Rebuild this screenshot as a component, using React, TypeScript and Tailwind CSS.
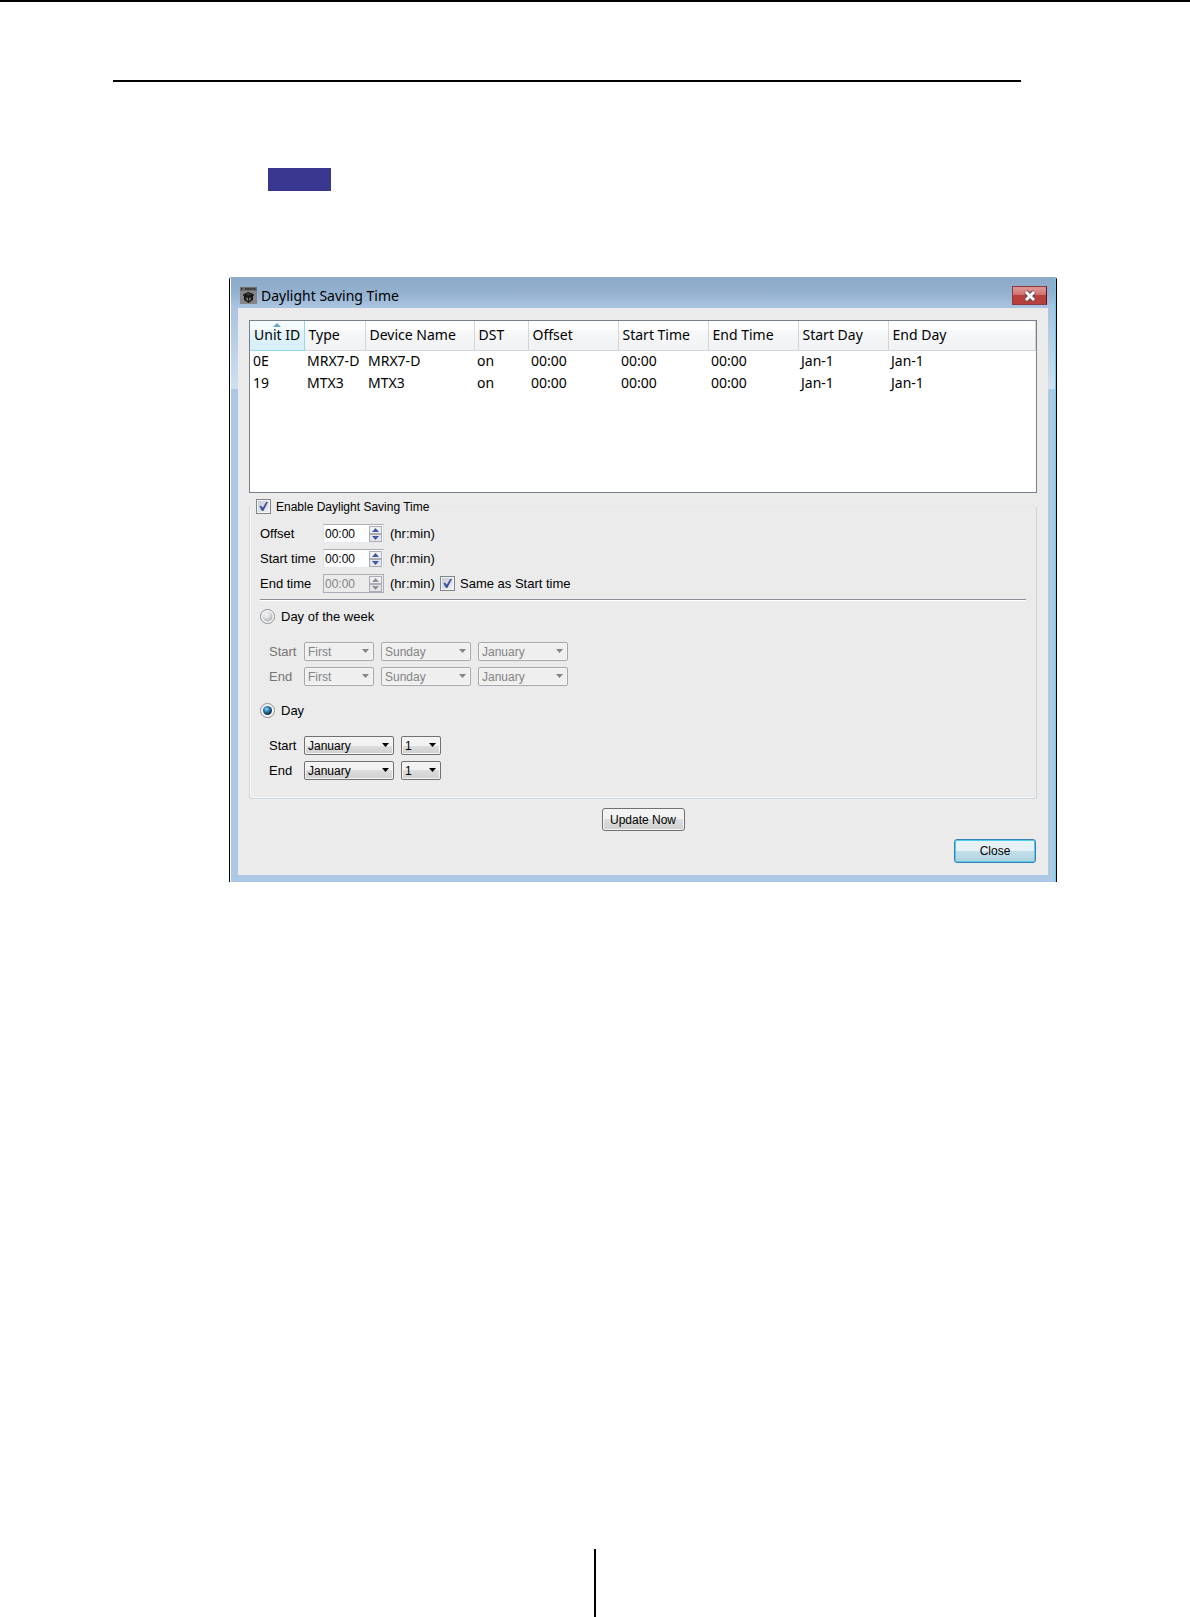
import React, { useState } from 'react';

type Device = {
    id: string;
    type: string;
    name: string;
    dst: string;
    offset: string;
    startTime: string;
    endTime: string;
    startDay: string;
    endDay: string;
};

const devices: Device[] = [
    { id: '0E', type: 'MRX7-D', name: 'MRX7-D', dst: 'on', offset: '00:00', startTime: '00:00', endTime: '00:00', startDay: 'Jan-1', endDay: 'Jan-1' },
    { id: '19', type: 'MTX3', name: 'MTX3', dst: 'on', offset: '00:00', startTime: '00:00', endTime: '00:00', startDay: 'Jan-1', endDay: 'Jan-1' },
];

const columns = [
    { label: 'Unit ID', width: 'w-[54px]' },
    { label: 'Type', width: 'w-[61px]' },
    { label: 'Device Name', width: 'w-[109px]' },
    { label: 'DST', width: 'w-[54px]' },
    { label: 'Offset', width: 'w-[90px]' },
    { label: 'Start Time', width: 'w-[90px]' },
    { label: 'End Time', width: 'w-[90px]' },
    { label: 'Start Day', width: 'w-[90px]' },
    { label: 'End Day', width: '' },
];

const AppIcon: React.FC = () => (
    <svg className="h-[17px] w-[17px]" viewBox="0 0 17 17" aria-hidden="true">
        <rect width="17" height="17" fill="#858585" />
        <rect width="17" height="4" fill="#6e6e6e" />
        <path d="M1 2h1.500M5 2h11" stroke="#2a2a2a" strokeWidth="1.600" strokeDasharray="1.700 0.500" />
        <path d="M8.500 5L13.800 7.300V8.800L13 9V13L8.500 16L4 13V9L3.200 8.800V7.300Z" fill="#181818" />
        <path d="M8.500 6L11.500 7.300L8.500 8.600L5.500 7.300Z" fill="#3c3c3c" />
        <path d="M6.300 10.200L8 11V14L6.300 13ZM10.700 10.200L9 11V14L10.700 13Z" fill="#777" />
    </svg>
);

type CheckProps = { id: string; checked: boolean; onChange: (value: boolean) => void };

const CheckBox: React.FC<CheckProps> = ({ id, checked, onChange }) => (
    <span className="relative block h-[15px] w-[15px] shrink-0">
        <input
            id={id}
            type="checkbox"
            checked={checked}
            onChange={(e) => onChange(e.target.checked)}
            className="block h-[15px] w-[15px] appearance-none border border-[#80858c] bg-linear-to-br from-[#c3c8d0] to-[#f4f5f7] shadow-[inset_0_0_0_1px_#f4f4f4]"
        />
        {checked && (
            <svg className="pointer-events-none absolute inset-0 h-[15px] w-[15px]" viewBox="0 0 15 15" aria-hidden="true">
                <path d="M3.500 7.500L5 6.500L6.700 8.700L10.200 3L12 3L7.300 12H6Z" fill="#3e4f9c" />
            </svg>
        )}
    </span>
);

type RadioProps = { id: string; checked: boolean; onSelect: () => void };

const Radio: React.FC<RadioProps> = ({ id, checked, onSelect }) => (
    <span className="relative block h-[15px] w-[15px] shrink-0">
        <input
            id={id}
            type="radio"
            name="dstMode"
            checked={checked}
            onChange={onSelect}
            className="block h-[15px] w-[15px] appearance-none rounded-full border border-[#8c9095] bg-[#f6f6f6]"
        />
        <svg className="pointer-events-none absolute inset-0 h-[15px] w-[15px]" viewBox="0 0 15 15" aria-hidden="true">
            <defs>
                <radialGradient id={id + '-fill'} cx="0.4" cy="0.35" r="0.6">
                    <stop offset="0" stopColor={checked ? '#8fe0fa' : '#f2f3f4'} />
                    <stop offset="0.5" stopColor={checked ? '#2a7db0' : '#e0e2e4'} />
                    <stop offset="1" stopColor={checked ? '#13304f' : '#b4b7bb'} />
                </radialGradient>
            </defs>
            <circle cx="7.500" cy="7.500" r={checked ? 4.5 : 5} fill={`url(#${id}-fill)`} />
        </svg>
    </span>
);

const TimeSpinner: React.FC<{ id: string; disabled?: boolean }> = ({ id, disabled }) => {
    const arrow = disabled ? '#8f8f8f' : '#3c56b0';
    return (
        <span
            className={
                disabled
                    ? 'flex h-[19px] w-[61px] items-center border border-[#abadb3] pr-px'
                    : 'flex h-[19px] w-[61px] items-center border border-t-[#abadb3] border-x-[#dde2e8] border-b-[#e3e9ef] bg-white pr-px'
            }
        >
            <input
                id={id}
                type="text"
                defaultValue="00:00"
                disabled={disabled}
                className="h-[17px] min-w-0 flex-1 bg-transparent pl-px text-xs text-black outline-none disabled:text-[#838383]"
            />
            <span className="flex w-[13px] flex-col">
                <button type="button" disabled={disabled} aria-label="Increase" className="flex h-2 items-center justify-center border border-[#a9abb5] bg-[#f0f0f3]">
                    <svg className="h-1 w-[7px]" viewBox="0 0 7 4" aria-hidden="true"><path d="M0 4L3.500 0L7 4Z" fill={arrow} /></svg>
                </button>
                <button type="button" disabled={disabled} aria-label="Decrease" className="flex h-2 items-center justify-center border border-[#a9abb5] bg-[#e6e6ea]">
                    <svg className="h-1 w-[7px]" viewBox="0 0 7 4" aria-hidden="true"><path d="M0 0L3.500 4L7 0Z" fill={arrow} /></svg>
                </button>
            </span>
        </span>
    );
};

type SelectProps = { id?: string; label?: string; value: string; width: string; disabled?: boolean };

const Select: React.FC<SelectProps> = ({ id, label, value, width, disabled }) => (
    <span className={`relative block ${width}`}>
        <select
            id={id}
            aria-label={label}
            defaultValue={value}
            disabled={disabled}
            className="block h-[19px] w-full appearance-none rounded-[2px] border border-[#707070] bg-linear-to-b from-[#f2f2f2] from-50% via-[#dddddd] via-50% to-[#cfcfcf] pl-[3px] text-xs text-black shadow-[inset_0_0_0_1px_#f6f6f6] disabled:border-[#a4a8ae] disabled:bg-none disabled:bg-[#efefef] disabled:text-[#838383] disabled:opacity-100"
        >
            <option>{value}</option>
        </select>
        <svg className="pointer-events-none absolute top-[7px] right-[5px] h-1 w-[7px]" viewBox="0 0 7 4" aria-hidden="true">
            <path d="M0 0H7L3.500 4Z" fill={disabled ? '#838383' : '#000'} />
        </svg>
    </span>
);

const App: React.FC = () => {
    const [enabled, setEnabled] = useState(true);
    const [sameAsStart, setSameAsStart] = useState(true);
    const [mode, setMode] = useState<'week' | 'day'>('day');

    const weekOff = mode !== 'week';
    const dayOff = mode !== 'day';

    return (
        <div className="flex min-h-screen flex-col border-t-2 border-black bg-white font-['Liberation_Sans',Arial,sans-serif] text-black">
            <div className="mt-[78px] mr-[169px] ml-[113px] h-0.5 bg-black"></div>
            <div className="mt-[86px] ml-[268px] h-[23px] w-[63px] bg-[#393790]"></div>

            <main className="mt-[86px] mr-[133px] ml-[229px] overflow-hidden rounded-t-[3px] border-x border-black">
                <div className="border-r border-l border-l-white border-r-[#5fd0ea] bg-[#adc8e4]">
                    <header className="flex h-[31px] items-center gap-1 bg-linear-to-b from-[#8caac9] via-[#94b0cf] to-[#abc6e3] pt-1.5 pr-2 pl-[9px]">
                        <AppIcon />
                        <h1 className="flex-1 font-['Noto_Sans',sans-serif] text-sm leading-4">Daylight Saving Time</h1>
                        <button
                            type="button"
                            aria-label="Close window"
                            className="flex h-[19px] w-[35px] items-center justify-center border border-[#8e3a40] border-r-[#4a1a22] bg-linear-to-b from-[#dc9290] from-10% via-[#cf7270] via-45% to-[#b8403c] to-50%"
                        >
                            <svg className="h-3 w-3.5" viewBox="0 0 14 12" aria-hidden="true">
                                <path d="M3 2L11 10M11 2L3 10" stroke="#5b4a55" strokeWidth="5" />
                                <path d="M3 2L11 10M11 2L3 10" stroke="#fff" strokeWidth="3" />
                            </svg>
                        </button>
                    </header>

                    <div className="bg-linear-to-b from-[#a9c4e2] to-[#cfe0f0] bg-[length:100%_81px] bg-no-repeat px-[7px] pb-[7px]">
                        <div className="bg-[#ebebeb] px-[11px] py-3">
                            <div className="h-[173px] border border-[#767f8b] bg-white">
                                <table className="w-full table-fixed border-collapse text-left font-['Noto_Sans',sans-serif] text-sm leading-4 whitespace-nowrap">
                                    <thead>
                                        <tr className="h-[29px]">
                                            {columns.map((col, i) => (
                                                <th
                                                    key={col.label}
                                                    scope="col"
                                                    aria-sort={i === 0 ? 'ascending' : undefined}
                                                    className={`relative border-r border-b p-0 pl-1 font-normal ${col.width} ${
                                                        i === 0
                                                            ? 'border-[#9bd5e8] bg-linear-to-b from-[#f3fbfe] from-30% via-[#e3f4fa] via-30% to-[#d5eef7]'
                                                            : 'border-[#d5d5d5] bg-linear-to-b from-white from-30% via-[#f7f8fa] via-30% to-[#f0f1f3]'
                                                    }`}
                                                >
                                                    {i === 0 && (
                                                        <svg className="absolute top-0.5 left-[23px] h-1 w-2" viewBox="0 0 8 4" aria-hidden="true">
                                                            <path d="M0 4L4 0L8 4Z" fill="#6aa5c4" />
                                                        </svg>
                                                    )}
                                                    {col.label}
                                                </th>
                                            ))}
                                        </tr>
                                    </thead>
                                    <tbody>
                                        {devices.map((d) => (
                                            <tr key={d.id} className="h-[22px]">
                                                {Object.values(d).map((value, i) => (
                                                    <td key={i} className="p-0 pl-[3px]">{value}</td>
                                                ))}
                                            </tr>
                                        ))}
                                    </tbody>
                                </table>
                            </div>

                            <fieldset className="mt-1.5 rounded-[3px] border border-[#cbd6de] border-t-[#e4eaec] px-2.5 pt-2.5 pb-[18px] text-[13px] leading-[15px] shadow-[inset_1px_-1px_0_#f8f8f8]">
                                <legend className="-ml-1 flex h-[15px] items-center gap-[5px] pr-1 text-xs">
                                    <CheckBox id="enable" checked={enabled} onChange={setEnabled} />
                                    <label htmlFor="enable">Enable Daylight Saving Time</label>
                                </legend>

                                <div className="grid gap-1.5">
                                    <div className="flex h-[19px] items-center">
                                        <label htmlFor="offset" className="w-[63px]">Offset</label>
                                        <TimeSpinner id="offset" />
                                        <span className="ml-1.5 w-[50px]">(hr:min)</span>
                                    </div>
                                    <div className="flex h-[19px] items-center">
                                        <label htmlFor="startTime" className="w-[63px]">Start time</label>
                                        <TimeSpinner id="startTime" />
                                        <span className="ml-1.5 w-[50px]">(hr:min)</span>
                                    </div>
                                    <div className="flex h-[19px] items-center">
                                        <label htmlFor="endTime" className="w-[63px]">End time</label>
                                        <TimeSpinner id="endTime" disabled={sameAsStart} />
                                        <span className="ml-1.5 w-[50px]">(hr:min)</span>
                                        <CheckBox id="sameAsStart" checked={sameAsStart} onChange={setSameAsStart} />
                                        <label htmlFor="sameAsStart" className="ml-[5px]">Same as Start time</label>
                                    </div>
                                </div>

                                <div className="mt-1.5 h-0.5 border-t border-b border-t-[#8a9095] border-b-white"></div>

                                <div className="mt-2 flex items-center gap-1.5">
                                    <Radio id="weekMode" checked={mode === 'week'} onSelect={() => setMode('week')} />
                                    <label htmlFor="weekMode">Day of the week</label>
                                </div>
                                <div className={`mt-[18px] ml-[9px] grid gap-1.5 ${weekOff ? 'text-[#757575]' : ''}`}>
                                    {['Start', 'End'].map((label) => (
                                        <div key={label} className="flex h-[19px] items-center">
                                            <label htmlFor={'week' + label} className="w-[35px]">{label}</label>
                                            <div className="flex gap-[7px]">
                                                <Select id={'week' + label} value="First" width="w-[70px]" disabled={weekOff} />
                                                <Select label={label + ' weekday'} value="Sunday" width="w-[90px]" disabled={weekOff} />
                                                <Select label={label + ' month'} value="January" width="w-[90px]" disabled={weekOff} />
                                            </div>
                                        </div>
                                    ))}
                                </div>

                                <div className="mt-[17px] flex items-center gap-1.5">
                                    <Radio id="dayMode" checked={mode === 'day'} onSelect={() => setMode('day')} />
                                    <label htmlFor="dayMode">Day</label>
                                </div>
                                <div className={`mt-[18px] ml-[9px] grid gap-1.5 ${dayOff ? 'text-[#757575]' : ''}`}>
                                    {['Start', 'End'].map((label) => (
                                        <div key={label} className="flex h-[19px] items-center">
                                            <label htmlFor={'day' + label} className="w-[35px]">{label}</label>
                                            <div className="flex gap-[7px]">
                                                <Select id={'day' + label} value="January" width="w-[90px]" disabled={dayOff} />
                                                <Select label={label + ' day'} value="1" width="w-[40px]" disabled={dayOff} />
                                            </div>
                                        </div>
                                    ))}
                                </div>
                            </fieldset>

                            <div className="mt-[9px] flex justify-center">
                                <button
                                    type="button"
                                    className="h-[23px] w-[83px] rounded-[3px] border border-[#707070] bg-linear-to-b from-[#f2f2f2] from-50% via-[#dddddd] via-50% to-[#cfcfcf] text-xs shadow-[inset_0_0_0_1px_#f6f6f6]"
                                >
                                    Update Now
                                </button>
                            </div>
                            <div className="mt-2 flex justify-end pr-px">
                                <button
                                    type="button"
                                    className="h-6 w-[82px] rounded-[3px] border border-[#3c7fb1] bg-linear-to-b from-[#e6f2f6] from-50% via-[#c3e0ea] via-50% to-[#b0d3e0] text-xs shadow-[inset_0_0_0_1px_#4fcdf0]"
                                >
                                    Close
                                </button>
                            </div>
                        </div>
                    </div>
                </div>
            </main>

            <footer className="mt-auto flex justify-center">
                <div className="h-[68px] w-0.5 bg-black"></div>
            </footer>
        </div>
    );
};

export default App;
